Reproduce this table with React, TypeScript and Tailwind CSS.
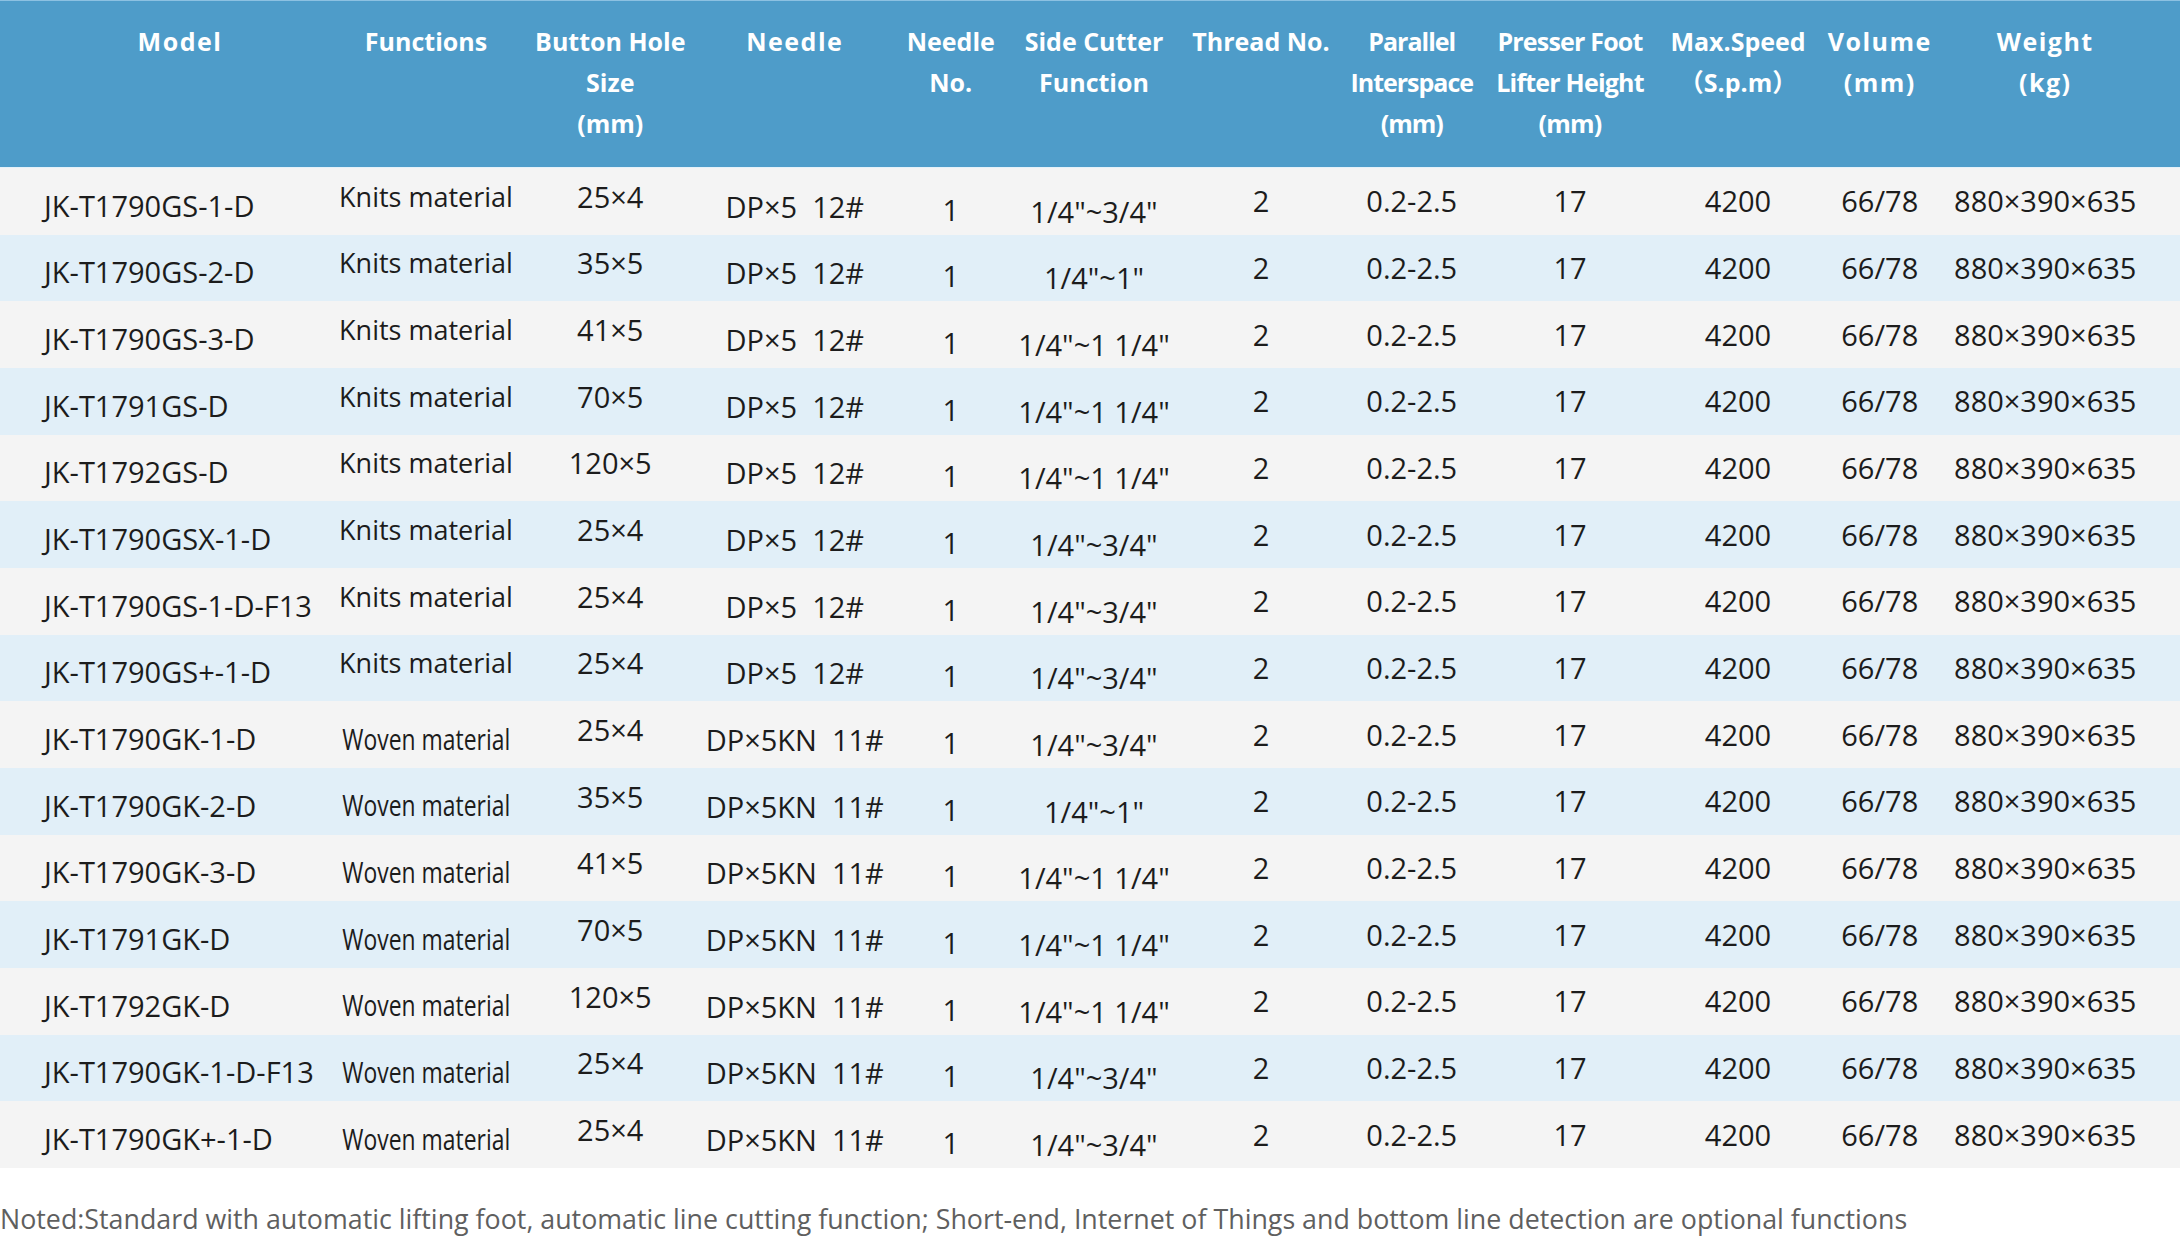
import React from "react";

type Row = {
  model: string;
  fn: "Knits material" | "Woven material";
  size: string;
  needle: string;
  cutter: string;
};

const rows: Row[] = [
  { model: "JK-T1790GS-1-D", fn: "Knits material", size: "25×4", needle: "DP×5  12#", cutter: '1/4"~3/4"' },
  { model: "JK-T1790GS-2-D", fn: "Knits material", size: "35×5", needle: "DP×5  12#", cutter: '1/4"~1"' },
  { model: "JK-T1790GS-3-D", fn: "Knits material", size: "41×5", needle: "DP×5  12#", cutter: '1/4"~1 1/4"' },
  { model: "JK-T1791GS-D", fn: "Knits material", size: "70×5", needle: "DP×5  12#", cutter: '1/4"~1 1/4"' },
  { model: "JK-T1792GS-D", fn: "Knits material", size: "120×5", needle: "DP×5  12#", cutter: '1/4"~1 1/4"' },
  { model: "JK-T1790GSX-1-D", fn: "Knits material", size: "25×4", needle: "DP×5  12#", cutter: '1/4"~3/4"' },
  { model: "JK-T1790GS-1-D-F13", fn: "Knits material", size: "25×4", needle: "DP×5  12#", cutter: '1/4"~3/4"' },
  { model: "JK-T1790GS+-1-D", fn: "Knits material", size: "25×4", needle: "DP×5  12#", cutter: '1/4"~3/4"' },
  { model: "JK-T1790GK-1-D", fn: "Woven material", size: "25×4", needle: "DP×5KN  11#", cutter: '1/4"~3/4"' },
  { model: "JK-T1790GK-2-D", fn: "Woven material", size: "35×5", needle: "DP×5KN  11#", cutter: '1/4"~1"' },
  { model: "JK-T1790GK-3-D", fn: "Woven material", size: "41×5", needle: "DP×5KN  11#", cutter: '1/4"~1 1/4"' },
  { model: "JK-T1791GK-D", fn: "Woven material", size: "70×5", needle: "DP×5KN  11#", cutter: '1/4"~1 1/4"' },
  { model: "JK-T1792GK-D", fn: "Woven material", size: "120×5", needle: "DP×5KN  11#", cutter: '1/4"~1 1/4"' },
  { model: "JK-T1790GK-1-D-F13", fn: "Woven material", size: "25×4", needle: "DP×5KN  11#", cutter: '1/4"~3/4"' },
  { model: "JK-T1790GK+-1-D", fn: "Woven material", size: "25×4", needle: "DP×5KN  11#", cutter: '1/4"~3/4"' },
];

const GRID =
  "grid grid-cols-[303px_215px_184.5px_170.5px_149.5px_155px_159px_154.5px_163px_155px_153.5px_217.5px]";

function HeaderCell({ className, children }: { className?: string; children: React.ReactNode }) {
  return <div className={"text-center whitespace-nowrap " + (className ?? "")}>{children}</div>;
}

export default function App() {
  return (
    <div className="w-[2180px] h-[1250px] bg-white font-['Open_Sans','Noto_Sans_CJK_SC',sans-serif] overflow-hidden">
      {/* Header */}
      <div
        className={
          GRID +
          " h-[168px] bg-[#4e9cc9] border-t border-t-[#8cc1e2] border-b border-b-[#e4f1f9] pt-[20px] text-white font-bold text-[25px] leading-[41px]"
        }
      >
        <HeaderCell className="pl-[57px] tracking-[1.5px]">Model</HeaderCell>
        <HeaderCell className="pl-[31px]">Functions</HeaderCell>
        <HeaderCell>
          Button Hole
          <br />
          Size
          <br />
          (mm)
        </HeaderCell>
        <HeaderCell className="pl-[14px] tracking-[1.5px]">Needle</HeaderCell>
        <HeaderCell className="pl-[6px]">
          Needle
          <br />
          No.
        </HeaderCell>
        <HeaderCell className="pr-[12px]">
          Side Cutter
          <br />
          Function
        </HeaderCell>
        <HeaderCell className="pl-[8px]">Thread No.</HeaderCell>
        <HeaderCell className="pr-[4px] tracking-[-1px]">
          Parallel
          <br />
          Interspace
          <br />
          (mm)
        </HeaderCell>
        <HeaderCell className="pr-[5px] tracking-[-0.8px]">
          Presser Foot
          <br />
          Lifter Height
          <br />
          (mm)
        </HeaderCell>
        <HeaderCell className="pl-[13px]">
          Max.Speed
          <br />
          （S.p.m）
        </HeaderCell>
        <HeaderCell className="pr-[12px] tracking-[1.5px]">
          Volume
          <br />
          (mm)
        </HeaderCell>
        <HeaderCell className="pr-[52px] tracking-[1.5px]">
          Weight
          <br />
          (kg)
        </HeaderCell>
      </div>

      {/* Body */}
      <div className="text-[29px] text-[#1c1c1c] leading-[36px]">
        {rows.map((r, i) => (
          <div
            key={r.model + i}
            className={GRID + " h-[66.66px] " + (i % 2 === 0 ? "bg-[#f4f4f4]" : "bg-[#e1eff8]")}
          >
            <div className="flex items-center pl-[44px] pt-[9px] whitespace-nowrap">{r.model}</div>
            {r.fn === "Knits material" ? (
              <div className="flex items-center justify-center pl-[31px] pb-[9px] whitespace-nowrap text-[27px]">
                {r.fn}
              </div>
            ) : (
              <div className="flex items-center justify-center pl-[31px] pt-[8px] whitespace-nowrap text-[29px]">
                <span className="inline-block scale-x-[0.79]">{r.fn}</span>
              </div>
            )}
            <div className="flex items-center justify-center pb-[9px] whitespace-nowrap">{r.size}</div>
            <div className="flex items-center justify-center pl-[14px] pt-[11px] whitespace-pre">{r.needle}</div>
            <div className="flex items-center justify-center pl-[6px] pt-[17px]">1</div>
            <div className="flex items-center justify-center pr-[12px] pt-[21px] whitespace-nowrap">{r.cutter}</div>
            <div className="flex items-center justify-center pl-[8px]">2</div>
            <div className="flex items-center justify-center pr-[4px]">0.2-2.5</div>
            <div className="flex items-center justify-center pr-[5px]">17</div>
            <div className="flex items-center justify-center pl-[13px]">4200</div>
            <div className="flex items-center justify-center pr-[12px]">66/78</div>
            <div className="flex items-center justify-center pr-[52px] whitespace-nowrap">880×390×635</div>
          </div>
        ))}
      </div>

      {/* Note */}
      <p className="mt-[33px] text-[26.8px] leading-[36px] text-[#5f5f5f] whitespace-nowrap">
        Noted:Standard with automatic lifting foot, automatic line cutting function; Short-end, Internet of Things and
        bottom line detection are optional functions
      </p>
    </div>
  );
}
